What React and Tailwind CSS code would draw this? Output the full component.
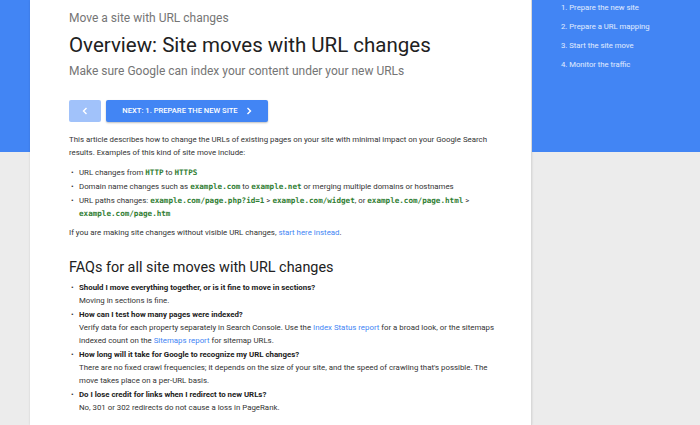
import React from "react";

const steps = [
  "1. Prepare the new site",
  "2. Prepare a URL mapping",
  "3. Start the site move",
  "4. Monitor the traffic",
];

function Code({ children }) {
  return (
    <code className="font-['DejaVu_Sans_Mono',monospace] text-[7.6px] leading-none font-bold text-[#2f7d32]">
      {children}
    </code>
  );
}

function A({ children }) {
  return <a className="text-[#4285f4]">{children}</a>;
}

function Faq({ q, children }) {
  return (
    <li className="flex">
      <span className="w-[10px] shrink-0 pl-[2px]">•</span>
      <div>
        <p className="font-bold text-[#212121]">{q}</p>
        <p>{children}</p>
      </div>
    </li>
  );
}

export default function App() {
  return (
    <div className="flex h-[425px] w-[700px] overflow-hidden bg-[#ececec] font-['Roboto',sans-serif]">
      {/* left gutter: blue band over grey */}
      <div className="w-[30px] shrink-0">
        <div className="h-[152px] bg-[#4285f4]" />
      </div>

      {/* article card */}
      <main className="w-[502px] shrink-0 border-r border-[#d9d9d9] bg-white pl-[39px] pr-[16px] pt-[10px] shadow-[0_0_2px_rgba(0,0,0,0.12)]">
        <p className="text-[12px] leading-[16px] text-[#757575]">Move a site with URL changes</p>
        <h1 className="mt-[6px] text-[20.5px] leading-[26px] text-[#212121]">
          Overview: Site moves with URL changes
        </h1>
        <p className="mt-[5px] text-[12px] leading-[16px] text-[#757575]">
          Make sure Google can index your content under your new URLs
        </p>

        <div className="mt-[21px] flex gap-[5px]">
          <button className="flex h-[22px] w-[32px] items-center justify-center rounded-[2px] bg-[#a1c2fa] text-white">
            <svg width="6" height="8" viewBox="0 0 6 8" fill="none" stroke="white" strokeWidth="1.4">
              <path d="M4.5 1 L1.5 4 L4.5 7" />
            </svg>
          </button>
          <button className="flex h-[22px] w-[162px] items-center justify-center gap-[8px] rounded-[2px] bg-[#4285f4] text-[7.6px] font-medium text-white shadow-[0_1px_2px_rgba(0,0,0,0.25)]">
            NEXT: 1. PREPARE THE NEW SITE
            <svg width="6" height="8" viewBox="0 0 6 8" fill="none" stroke="white" strokeWidth="1.4">
              <path d="M1.5 1 L4.5 4 L1.5 7" />
            </svg>
          </button>
        </div>

        <div className="text-[7.85px] leading-[13px] text-[#333333]">
          <p className="mt-[11px]">
            This article describes how to change the URLs of existing pages on your site with minimal impact on your Google Search
            <br />
            results. Examples of this kind of site move include:
          </p>
          <ul className="mt-[7px] leading-[14px]">
            <li className="flex">
              <span className="w-[10px] shrink-0 pl-[2px]">•</span>
              <span>
                URL changes from <Code>HTTP</Code> to <Code>HTTPS</Code>
              </span>
            </li>
            <li className="flex">
              <span className="w-[10px] shrink-0 pl-[2px]">•</span>
              <span>
                Domain name changes such as <Code>example.com</Code> to <Code>example.net</Code> or merging multiple domains or hostnames
              </span>
            </li>
            <li className="flex leading-[13px]">
              <span className="w-[10px] shrink-0 pl-[2px]">•</span>
              <span>
                URL paths changes: <Code>example.com/page.php?id=1</Code> &gt; <Code>example.com/widget</Code>, or{" "}
                <Code>example.com/page.html</Code> &gt;
                <br />
                <Code>example.com/page.htm</Code>
              </span>
            </li>
          </ul>
          <p className="mt-[6px]">
            If you are making site changes without visible URL changes, <A>start here instead</A>.
          </p>
        </div>

        <h2 className="mt-[19px] text-[14.4px] leading-[20px] text-[#212121]">FAQs for all site moves with URL changes</h2>

        <ul className="mt-[3px] space-y-[1px] text-[7.85px] leading-[13px] text-[#333333]">
          <Faq q="Should I move everything together, or is it fine to move in sections?">Moving in sections is fine.</Faq>
          <Faq q="How can I test how many pages were indexed?">
            Verify data for each property separately in Search Console. Use the <A>Index Status report</A> for a broad look, or the sitemaps
            <br />
            indexed count on the <A>Sitemaps report</A> for sitemap URLs.
          </Faq>
          <Faq q="How long will it take for Google to recognize my URL changes?">
            There are no fixed crawl frequencies; it depends on the size of your site, and the speed of crawling that's possible. The
            <br />
            move takes place on a per-URL basis.
          </Faq>
          <Faq q="Do I lose credit for links when I redirect to new URLs?">
            No, 301 or 302 redirects do not cause a loss in PageRank.
          </Faq>
        </ul>
      </main>

      {/* step navigation */}
      <aside className="flex-1">
        <ol className="h-[152px] bg-[#4285f4] pl-[29px] pt-[2px] text-[7.7px] leading-[12px] text-white/85">
          {steps.map((s) => (
            <li key={s} className="mb-[7px]">
              {s}
            </li>
          ))}
        </ol>
      </aside>
    </div>
  );
}
